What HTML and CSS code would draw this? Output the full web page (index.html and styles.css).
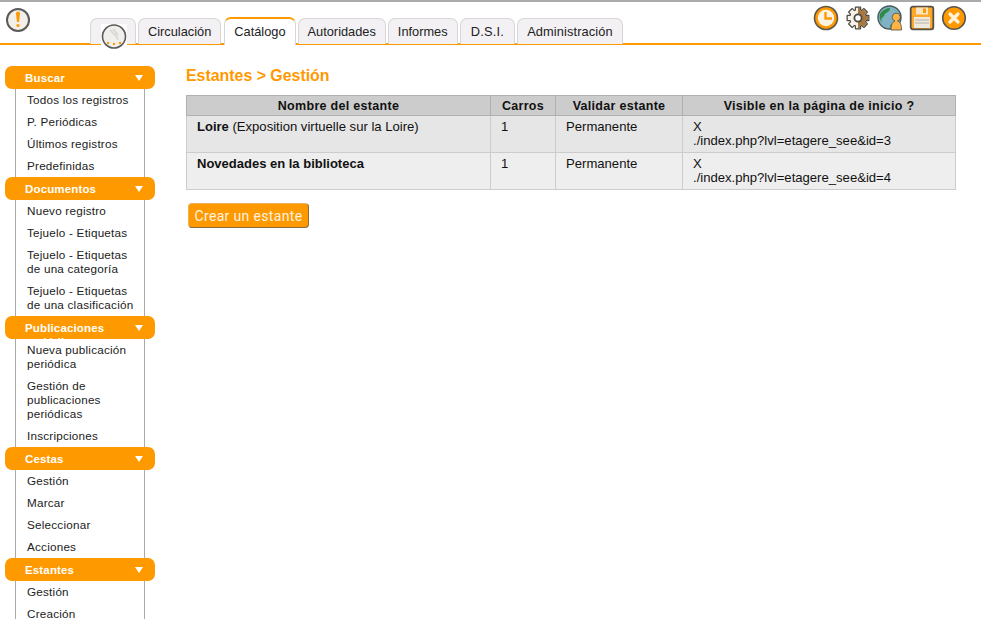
FILE: index.html
```html
<!DOCTYPE html>
<html lang="es">
<head>
<meta charset="utf-8">
<title>Estantes - Gestión</title>
<link rel="stylesheet" href="styles.css">
</head>
<body>
<header class="topbar">
  <svg class="alert-icon" width="26" height="26" viewBox="0 0 26 26">
    <circle cx="13" cy="13" r="11" fill="#f4efe8" stroke="#5a5a5a" stroke-width="2"/>
    <path d="M11 6.500a2 2 0 0 1 4 0L14 15h-2z" fill="#f90"/>
    <circle cx="13" cy="18.500" r="1.600" fill="#f90"/>
  </svg>
  <nav class="tabs">
    <div class="tab tab-home">
      <svg class="home-icon" width="26" height="25" viewBox="0 0 26 25">
        <rect width="26" height="25" fill="#fff"/>
        <circle cx="13" cy="12.500" r="11.500" fill="#f1efec" stroke="#5a5a5a" stroke-width="1.600"/>
        <path d="M9 6l7 7 1 3M12 5l5 6" fill="none" stroke="#dcdad7" stroke-width="2"/>
        <circle cx="7" cy="19" r="1.200" fill="#f90"/><circle cx="13" cy="20" r="1.200" fill="#f90"/><circle cx="19" cy="19" r="1.200" fill="#f90"/>
      </svg>
    </div>
    <a class="tab">Circulación</a>
    <a class="tab tab-active">Catálogo</a>
    <a class="tab">Autoridades</a>
    <a class="tab">Informes</a>
    <a class="tab tab-dsi">D.S.I.</a>
    <a class="tab tab-admin">Administración</a>
  </nav>
  <div class="tools">
    <svg width="26" height="26" viewBox="0 0 26 26"><circle cx="13" cy="13" r="11.500" fill="#f90" stroke="#5c5850" stroke-width="1.600"/><circle cx="13" cy="13" r="8.200" fill="#fbf3e6"/><path d="M12.500 7v6.500H19" fill="none" stroke="#f90" stroke-width="2.400"/></svg>
    <svg width="26" height="26" viewBox="0 0 26 26">
      <defs>
        <clipPath id="gear-right"><rect x="13" y="0" width="13" height="26"/></clipPath>
        <g id="gear-outer">
          <rect x="9.800" y="1.500" width="6.400" height="23" rx="1"/>
          <rect x="9.800" y="1.500" width="6.400" height="23" rx="1" transform="rotate(45 13 13)"/>
          <rect x="9.800" y="1.500" width="6.400" height="23" rx="1" transform="rotate(90 13 13)"/>
          <rect x="9.800" y="1.500" width="6.400" height="23" rx="1" transform="rotate(135 13 13)"/>
          <circle cx="13" cy="13" r="9"/>
        </g>
        <g id="gear-inner">
          <rect x="11" y="2.800" width="4" height="20.400"/>
          <rect x="11" y="2.800" width="4" height="20.400" transform="rotate(45 13 13)"/>
          <rect x="11" y="2.800" width="4" height="20.400" transform="rotate(90 13 13)"/>
          <rect x="11" y="2.800" width="4" height="20.400" transform="rotate(135 13 13)"/>
          <circle cx="13" cy="13" r="7.800"/>
        </g>
      </defs>
      <use href="#gear-outer" fill="#4e4a42"/>
      <use href="#gear-inner" fill="#f6f2ea"/>
      <g clip-path="url(#gear-right)"><use href="#gear-inner" fill="#a8793f"/></g>
      <circle cx="13" cy="13" r="3.600" fill="#fff" stroke="#4e4a42" stroke-width="1.800"/>
    </svg>
    <svg width="26" height="26" viewBox="0 0 26 26"><circle cx="12.500" cy="12.500" r="11.500" fill="#7fb2c2" stroke="#4a5a55" stroke-width="1.400"/><path d="M3 9c3-5 8-6 10-6 0 3-2 4-4 5s-1 3-3 4-2 4-1 6C3 15 2 12 3 9zM13 20l3-1 1 4-3 1z" fill="#2f8a4a"/><path d="M14 25c0-6 1.500-8 4-9a4 4 0 1 1 2.500 0c2.500 1 4 3 4 9z" fill="#ffb347" stroke="#4a4a40" stroke-width=".8"/></svg>
    <svg width="26" height="26" viewBox="0 0 26 26"><rect x="1.700" y="1.700" width="22.600" height="22.600" rx="2" fill="#ffa726" stroke="#55504a" stroke-width="1.800"/><rect x="7" y="2.500" width="12" height="7" fill="#fbe3bd"/><rect x="14" y="3.500" width="3" height="4.500" fill="#f90"/><rect x="5" y="12" width="16" height="11" fill="#efe9dd"/><path d="M6 15h14M6 18h14" stroke="#b5b0a6" stroke-width="1.200"/></svg>
    <svg width="26" height="26" viewBox="0 0 26 26"><circle cx="13" cy="13" r="11.300" fill="#f90" stroke="#5c5850" stroke-width="1.600"/><path d="M9 9l8 8M17 9l-8 8" stroke="#fff3dc" stroke-width="3.200" stroke-linecap="round"/></svg>
  </div>
</header>

<div class="page">
  <aside class="sidebar">
    <section class="group">
      <h3 class="group-title"><span class="group-label">Buscar</span></h3>
      <ul class="group-items">
        <li>Todos los registros</li>
        <li>P. Periódicas</li>
        <li>Últimos registros</li>
        <li>Predefinidas</li>
      </ul>
    </section>
    <section class="group">
      <h3 class="group-title"><span class="group-label">Documentos</span></h3>
      <ul class="group-items">
        <li>Nuevo registro</li>
        <li>Tejuelo - Etiquetas</li>
        <li>Tejuelo - Etiquetas de una categoría</li>
        <li>Tejuelo - Etiquetas de una clasificación</li>
      </ul>
    </section>
    <section class="group">
      <h3 class="group-title"><span class="group-label">Publicaciones periódicas</span></h3>
      <ul class="group-items">
        <li>Nueva publicación periódica</li>
        <li>Gestión de publicaciones periódicas</li>
        <li>Inscripciones</li>
      </ul>
    </section>
    <section class="group">
      <h3 class="group-title"><span class="group-label">Cestas</span></h3>
      <ul class="group-items">
        <li>Gestión</li>
        <li>Marcar</li>
        <li>Seleccionar</li>
        <li>Acciones</li>
      </ul>
    </section>
    <section class="group">
      <h3 class="group-title"><span class="group-label">Estantes</span></h3>
      <ul class="group-items">
        <li>Gestión</li>
        <li>Creación</li>
      </ul>
    </section>
  </aside>

  <main class="content">
    <h1 class="page-title">Estantes &gt; Gestión</h1>
    <table class="shelves">
      <colgroup>
        <col class="col-name"><col class="col-carts"><col class="col-valid"><col class="col-visible">
      </colgroup>
      <thead>
        <tr>
          <th>Nombre del estante</th>
          <th>Carros</th>
          <th>Validar estante</th>
          <th>Visible en la página de inicio ?</th>
        </tr>
      </thead>
      <tbody>
        <tr class="odd">
          <td><b>Loire</b> (Exposition virtuelle sur la Loire)</td>
          <td>1</td>
          <td>Permanente</td>
          <td>X<br>./index.php?lvl=etagere_see&amp;id=3</td>
        </tr>
        <tr class="even">
          <td><b>Novedades en la biblioteca</b></td>
          <td>1</td>
          <td>Permanente</td>
          <td>X<br>./index.php?lvl=etagere_see&amp;id=4</td>
        </tr>
      </tbody>
    </table>
    <button class="create-btn" type="button">Crear un estante</button>
  </main>
</div>
</body>
</html>
```
FILE: styles.css
```css
* { box-sizing: border-box; }
html, body { margin: 0; height: 100%; overflow: hidden; background: #fff; }
body { font-family: "Liberation Sans", Arial, sans-serif; color: #111; }

.topbar {
  display: flex;
  height: 45px;
  border-top: 2px solid #aaa;
  border-bottom: 2px solid #f90;
  position: relative;
}
.alert-icon { margin: 5px 0 0 5px; flex: none; }
.tabs { display: flex; align-items: flex-end; gap: 2px; margin-left: 59px; margin-bottom: -1px; }
.tab {
  height: 26px;
  padding: 0 9px;
  font-size: 12.8px;
  line-height: 25px;
  color: #222;
  background: #f3f1f3;
  border: 1px solid #d8d6d6;
  border-bottom: 0;
  border-radius: 7px 7px 0 0;
  white-space: nowrap;
}
.tab-dsi { padding: 0 10px; letter-spacing: .25px; }
.tab-admin { letter-spacing: .12px; }
.tab-home { width: 46px; padding: 0; position: relative; }
.home-icon { position: absolute; left: 10px; top: 5px; }
.tab-active {
  height: 28px;
  margin: 0 0 -1px 1px;
  line-height: 26px;
  background: #fff;
  border: 1px solid #d8d6d6;
  border-top: 2px solid #f90;
  border-bottom: 0;
}
.tools { display: flex; gap: 6px; margin: 3px 0 0 auto; padding-right: 14px; }

.page { display: flex; padding-top: 21px; }
.sidebar { width: 150px; margin-left: 5px; flex: none; }
.group-title {
  margin: 0;
  height: 23px;
  padding: 5px 30px 0 20px;
  overflow: hidden;
  font-size: 11.5px;
  line-height: 14px;
  letter-spacing: .15px;
  color: #fff;
  font-weight: bold;
  background: #f90;
  border-radius: 7px;
  position: relative;
}
.group-title::after {
  content: "";
  position: absolute;
  right: 12px;
  top: 9px;
  border: 4px solid transparent;
  border-top: 6px solid #fff;
  border-bottom: 0;
}
.group-items {
  list-style: none;
  margin: 0 0 0 10px;
  padding: 0;
  width: 130px;
  border-left: 1px solid #aaa;
  border-right: 1px solid #aaa;
}
.group-items li {
  padding: 4px 8px 4px 11px;
  font-size: 11.7px;
  letter-spacing: .22px;
  line-height: 14px;
  color: #222;
}

.content { flex: 1; padding: 0 25px 0 31px; }
.page-title {
  margin: 0 0 9px;
  font-size: 15.9px;
  line-height: 20px;
  color: #f90;
  font-weight: bold;
}
.shelves {
  width: 769px;
  table-layout: fixed;
  border-collapse: collapse;
  font-size: 13.1px;
  line-height: 14px;
}
.col-name { width: 304px; }
.col-carts { width: 65px; }
.col-valid { width: 127px; }
.col-visible { width: 273px; }
.shelves th {
  height: 20px;
  padding: 0;
  font-size: 12.5px;
  letter-spacing: .3px;
  background: #ccc;
  border: 1px solid #b0b0b0;
}
.shelves td {
  height: 37px;
  padding: 4px 10px;
  vertical-align: top;
  border: 1px solid #ccc;
}
.shelves b { font-size: 13px; }
.odd td { background: #e6e6e6; }
.even td { background: #eee; }
.create-btn {
  display: block;
  margin: 13px 0 0 2px;
  width: 121px;
  height: 25px;
  padding: 0;
  font-family: Roboto, sans-serif;
  font-size: 14px;
  letter-spacing: .35px;
  color: #fff3e0;
  background: #f90;
  border: 1px solid #e8b060;
  border-right-color: #8a6a3a;
  border-bottom-color: #8a6a3a;
  border-radius: 4px;
}
```
